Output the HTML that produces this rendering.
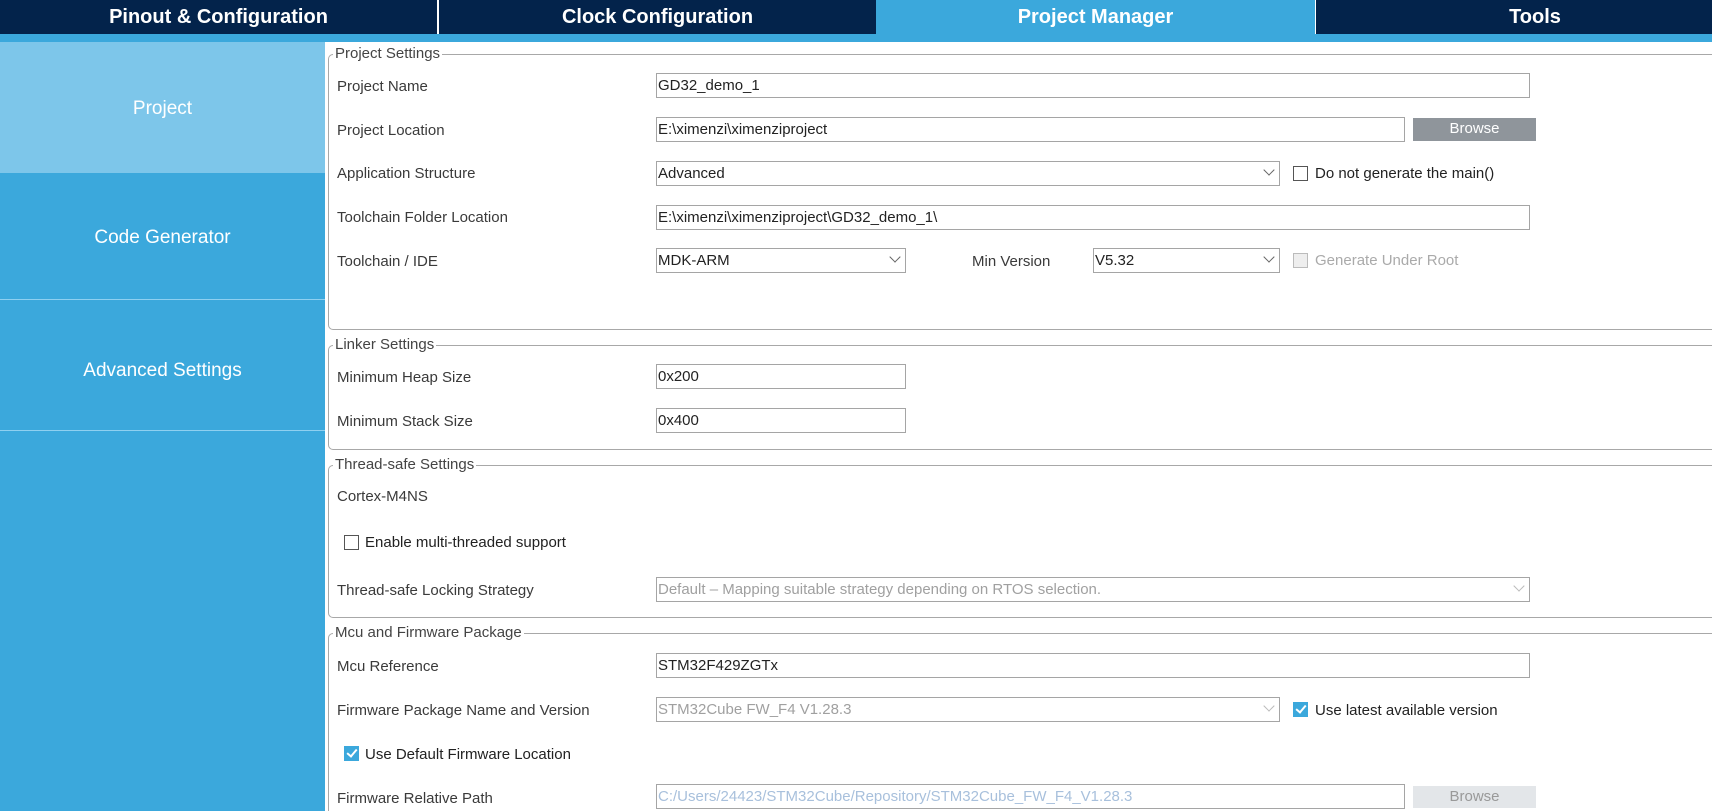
<!DOCTYPE html>
<html style="overflow:hidden;width:1712px;height:811px"><head><meta charset="utf-8"><style>
*{margin:0;padding:0;box-sizing:border-box}
body{width:1712px;height:811px;overflow:hidden;background:#fff;font-family:"Liberation Sans",Arial,sans-serif;position:relative}
.a{position:absolute}
.tab{position:absolute;top:0;height:34px;background:#03234b;color:#fff;font-size:20px;font-weight:bold;text-align:center;line-height:35px}
.side{position:absolute;left:0;width:325px;color:#fff;font-size:19px;text-align:center}
.box{position:absolute;left:328px;width:1384px;border:1.5px solid #a8a8a8;border-right:none;border-radius:5px 0 0 5px}
.lg{position:absolute;left:333px;background:#fff;color:#444;font-size:15px;padding:0 2px;line-height:18px}
.lb{position:absolute;left:337px;color:#3a3a3a;font-size:15px;line-height:18px}
.in{position:absolute;height:25px;border:1.5px solid #a5a5a5;background:#fff;font-size:15px;color:#222;line-height:23px;padding-left:1px;white-space:nowrap;overflow:hidden}
.dis{color:#a0a0a0}
.chev{position:absolute;right:6px;top:4px;width:8px;height:8px;border-right:1.3px solid #666;border-bottom:1.3px solid #666;transform:rotate(45deg)}
.dis .chev{border-color:#bbb}
.cb{position:absolute;width:15px;height:15px;border:1.5px solid #555;background:#fff}
.cbd{border-color:#bbb;background:#eee}
.cbc{background:#3ba8dc;border-color:#3ba8dc}
.cbc:after{content:"";position:absolute;left:3.5px;top:0px;width:4px;height:8px;border-right:2px solid #fff;border-bottom:2px solid #fff;transform:rotate(40deg)}
.btn{position:absolute;text-align:center;font-size:15px;line-height:22px}
</style></head><body>
<div class="tab" style="left:0;width:437px">Pinout &amp; Configuration</div>
<div class="tab" style="left:439px;width:437px">Clock Configuration</div>
<div class="tab" style="left:876px;width:439px;background:#3ba8dc">Project Manager</div>
<div class="tab" style="left:1316px;width:396px;text-indent:42px">Tools</div>
<div class="a" style="left:0;top:34px;width:1712px;height:8px;background:#3ba8dc"></div>
<div class="a" style="left:0;top:42px;width:325px;height:769px;background:#3ba8dc"></div>
<div class="side" style="top:42px;height:131px;background:#7dc6ea;line-height:133px">Project</div>
<div class="side" style="top:173px;height:127px;line-height:130px;border-bottom:1px solid #8fd0f0">Code Generator</div>
<div class="side" style="top:301px;height:130px;line-height:140px;border-bottom:1px solid #8fd0f0">Advanced Settings</div>

<div class="box" style="top:54px;height:276px"></div>
<div class="lg" style="top:45px">Project Settings</div>
<div class="lb" style="top:78px">Project Name</div>
<div class="in" style="left:656px;top:73px;width:874px">GD32_demo_1</div>
<div class="lb" style="top:122px">Project Location</div>
<div class="in" style="left:656px;top:117px;width:749px">E:\ximenzi\ximenziproject</div>
<div class="btn" style="left:1413px;top:118px;width:123px;height:23px;background:#8f959b;color:#fff">Browse</div>
<div class="lb" style="top:165px">Application Structure</div>
<div class="in" style="left:656px;top:161px;width:624px">Advanced<span class="chev"></span></div>
<div class="cb" style="left:1293px;top:166px"></div>
<div class="lb" style="left:1315px;top:165px;color:#222">Do not generate the main()</div>
<div class="lb" style="top:209px">Toolchain Folder Location</div>
<div class="in" style="left:656px;top:205px;width:874px">E:\ximenzi\ximenziproject\GD32_demo_1\</div>
<div class="lb" style="top:253px">Toolchain / IDE</div>
<div class="in" style="left:656px;top:248px;width:250px">MDK-ARM<span class="chev"></span></div>
<div class="lb" style="left:972px;top:253px">Min Version</div>
<div class="in" style="left:1093px;top:248px;width:187px">V5.32<span class="chev"></span></div>
<div class="cb cbd" style="left:1293px;top:253px"></div>
<div class="lb" style="left:1315px;top:252px;color:#aaa">Generate Under Root</div>

<div class="box" style="top:345px;height:105px"></div>
<div class="lg" style="top:336px">Linker Settings</div>
<div class="lb" style="top:369px">Minimum Heap Size</div>
<div class="in" style="left:656px;top:364px;width:250px">0x200</div>
<div class="lb" style="top:413px">Minimum Stack Size</div>
<div class="in" style="left:656px;top:408px;width:250px">0x400</div>

<div class="box" style="top:465px;height:153px"></div>
<div class="lg" style="top:456px">Thread-safe Settings</div>
<div class="lb" style="top:488px">Cortex-M4NS</div>
<div class="cb" style="left:344px;top:535px"></div>
<div class="lb" style="left:365px;top:534px;color:#222">Enable multi-threaded support</div>
<div class="lb" style="top:582px">Thread-safe Locking Strategy</div>
<div class="in dis" style="left:656px;top:577px;width:874px">Default – Mapping suitable strategy depending on RTOS selection.<span class="chev"></span></div>

<div class="box" style="top:633px;height:190px;border-bottom:none"></div>
<div class="lg" style="top:624px">Mcu and Firmware Package</div>
<div class="lb" style="top:658px">Mcu Reference</div>
<div class="in" style="left:656px;top:653px;width:874px">STM32F429ZGTx</div>
<div class="lb" style="top:702px">Firmware Package Name and Version</div>
<div class="in dis" style="left:656px;top:697px;width:624px">STM32Cube FW_F4 V1.28.3<span class="chev"></span></div>
<div class="cb cbc" style="left:1293px;top:702px"></div>
<div class="lb" style="left:1315px;top:702px;color:#222">Use latest available version</div>
<div class="cb cbc" style="left:344px;top:746px"></div>
<div class="lb" style="left:365px;top:746px;color:#222">Use Default Firmware Location</div>
<div class="lb" style="top:790px">Firmware Relative Path</div>
<div class="in" style="left:656px;top:784px;width:749px;color:#a8c0dc">C:/Users/24423/STM32Cube/Repository/STM32Cube_FW_F4_V1.28.3</div>
<div class="btn" style="left:1413px;top:786px;width:123px;height:22px;background:#e3e6e9;color:#999">Browse</div>
</body></html>
